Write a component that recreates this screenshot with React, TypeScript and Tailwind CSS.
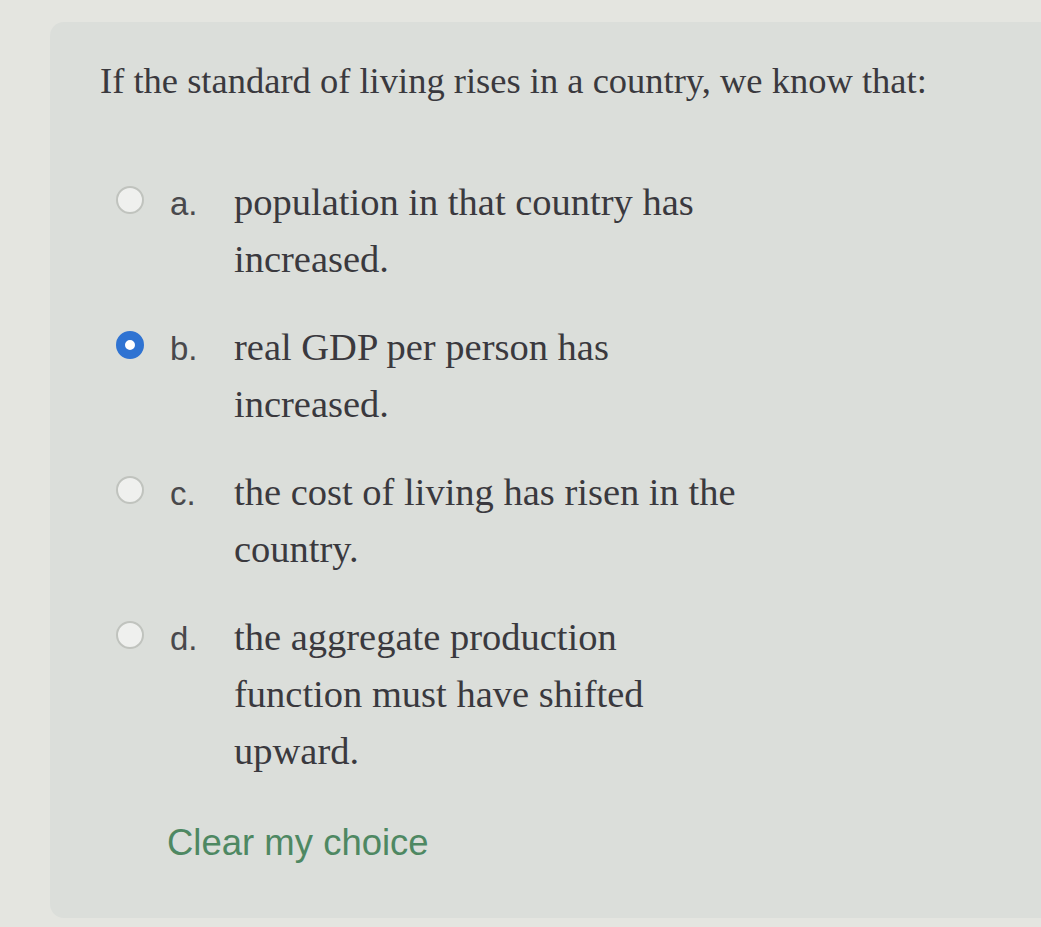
import React, { useState } from "react";

type Option = {
  letter: string;
  lines: string[];
};

const options: Option[] = [
  { letter: "a.", lines: ["population in that country has", "increased."] },
  { letter: "b.", lines: ["real GDP per person has", "increased."] },
  { letter: "c.", lines: ["the cost of living has risen in the", "country."] },
  {
    letter: "d.",
    lines: ["the aggregate production", "function must have shifted", "upward."],
  },
];

const serif = { fontFamily: '"Liberation Serif", "Times New Roman", serif' };
const sans = { fontFamily: '"Liberation Sans", Arial, sans-serif' };

const App = () => {
  const [selected, setSelected] = useState<number | null>(1);

  return (
    <div className="w-[1041px] h-[927px] overflow-hidden bg-[#e4e5e0] pt-[22px] pl-[50px]">
      <div className="h-[896px] rounded-l-[14px] bg-[#dbdeda] pt-[37px] pl-[50px]">
        <h1
          className="text-[36.5px] leading-[44px] text-[#3a393e] font-normal"
          style={serif}
        >
          If the standard of living rises in a country, we know that:
        </h1>

        <div className="mt-[71px] flex flex-col gap-[31px]">
          {options.map((opt, index) => (
            <div
              key={opt.letter}
              className="flex items-start cursor-pointer"
              onClick={() => setSelected(index)}
            >
              {selected === index ? (
                <span className="mt-[12px] ml-[16px] w-[28px] h-[28px] shrink-0 rounded-full border-[9px] border-[#2f73d2] bg-white" />
              ) : (
                <span className="mt-[12px] ml-[16px] w-[28px] h-[28px] shrink-0 rounded-full border-2 border-[#c0c3be] bg-[#eff0ee]" />
              )}
              <div className="ml-[26px] flex items-baseline">
                <span
                  className="w-[64px] shrink-0 text-[33px] leading-[57px] text-[#49494c]"
                  style={sans}
                >
                  {opt.letter}
                </span>
                <div
                  className="text-[38.5px] leading-[57px] text-[#3a393e]"
                  style={serif}
                >
                  {opt.lines.map((line) => (
                    <div key={line} className="whitespace-nowrap">
                      {line}
                    </div>
                  ))}
                </div>
              </div>
            </div>
          ))}
        </div>

        <button
          className="mt-[41px] ml-[67px] block text-[36.5px] leading-[44px] text-[#4e8862]"
          style={sans}
          onClick={() => setSelected(null)}
        >
          Clear my choice
        </button>
      </div>
    </div>
  );
};

export default App;
